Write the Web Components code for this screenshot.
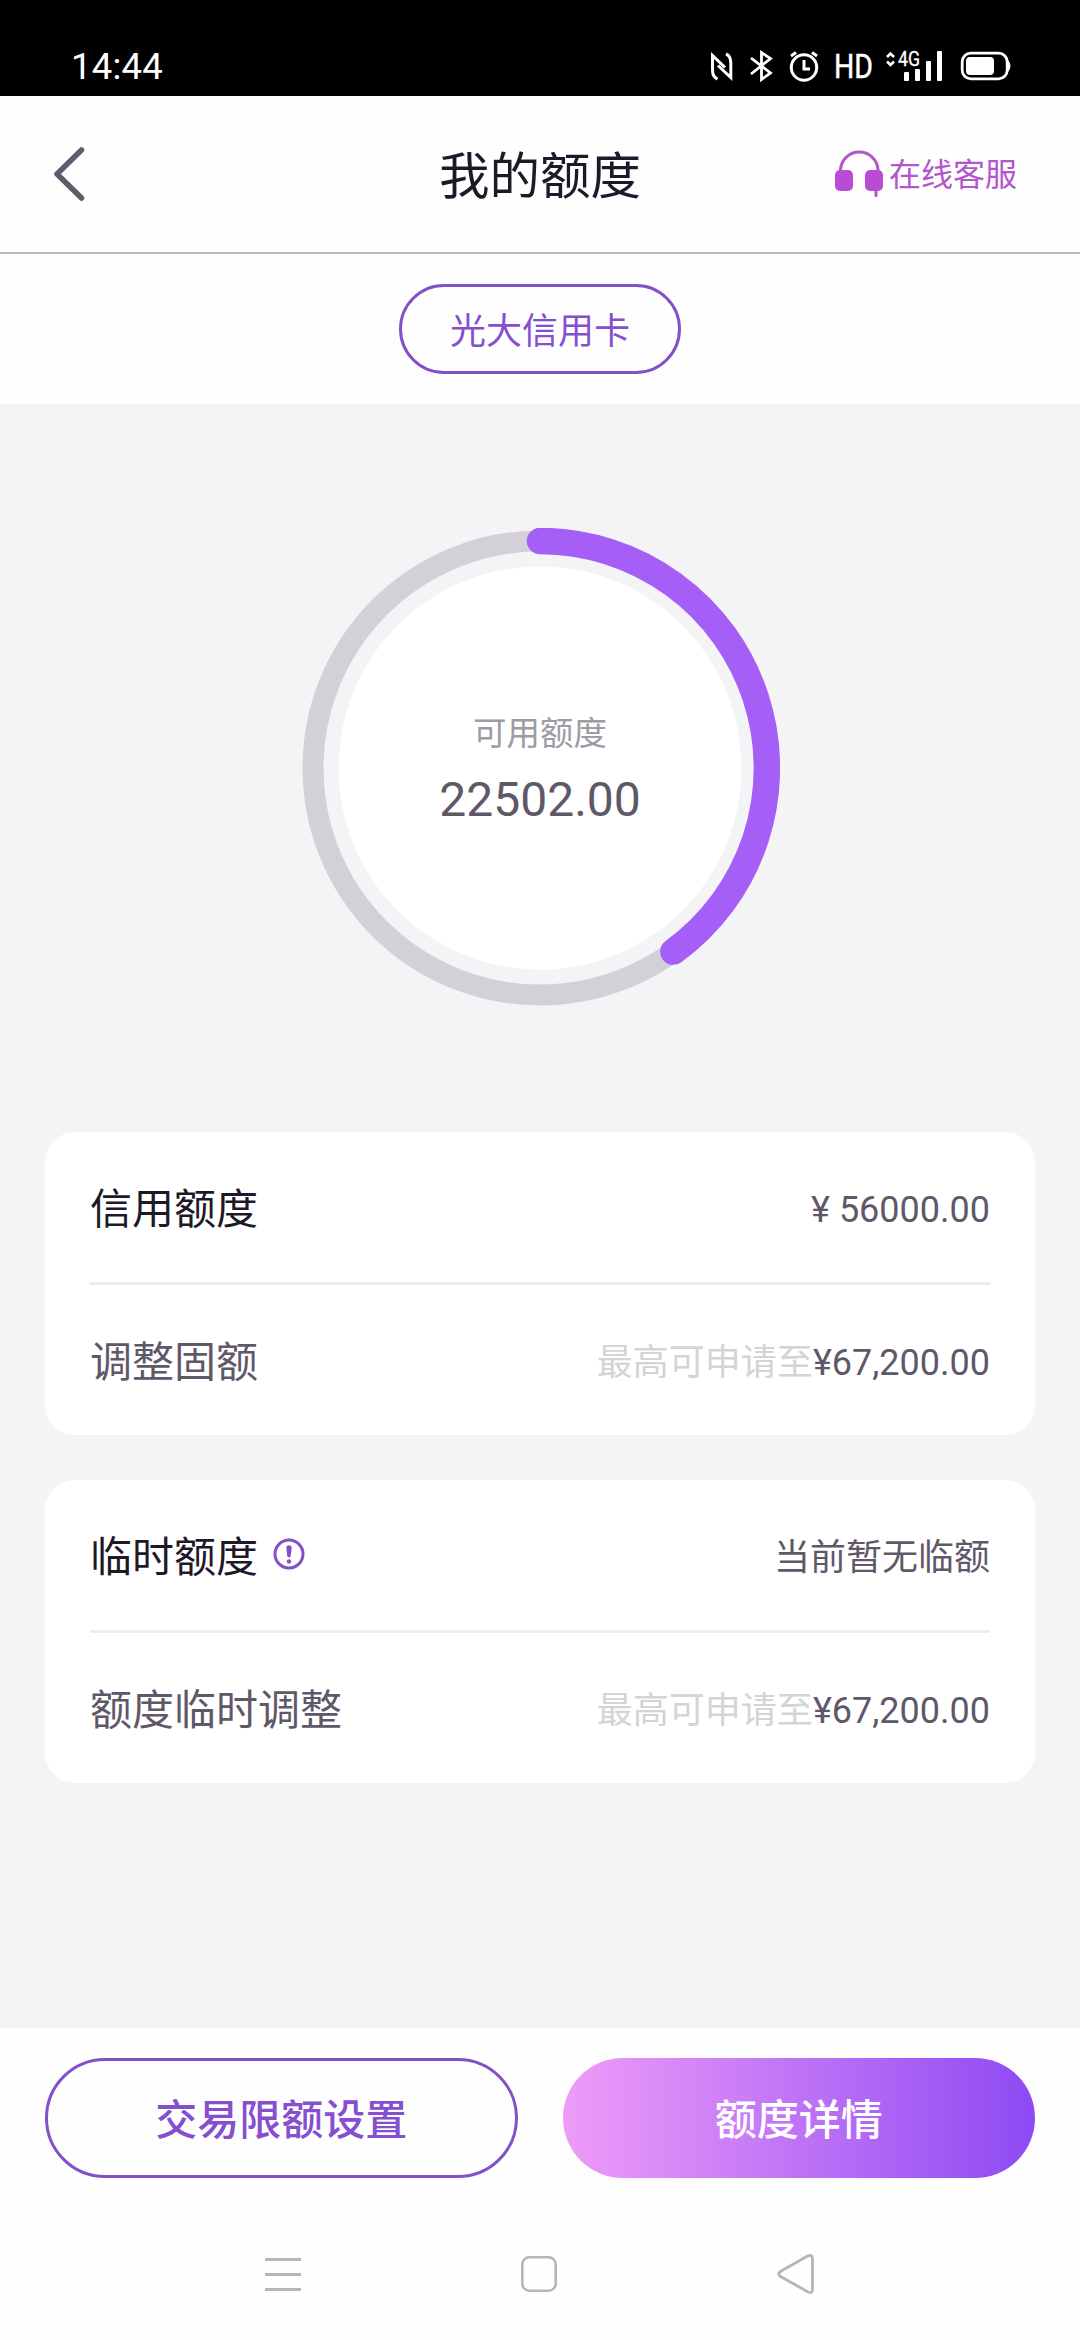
<!DOCTYPE html>
<html lang="zh-CN">
<head>
<meta charset="utf-8">
<title>我的额度</title>
<style>
html,body{margin:0;padding:0;background:#fefefe}
body{font-family:Roboto,"Noto Sans CJK SC",sans-serif;color:#5f5869;width:1080px}
</style>
</head>
<body>
<limit-app></limit-app>
<script>
const define = (name, html) => customElements.define(name, class extends HTMLElement {
  constructor() {
    super();
    const t = document.createElement('template');
    t.innerHTML = html;
    this.attachShadow({mode: 'open'}).append(t.content.cloneNode(true));
  }
});

define('status-bar', `
<style>
:host{display:flex;height:96px;background:#000;color:#fff;justify-content:space-between;box-sizing:border-box;padding:0 68px 0 71px}
.time{font-size:36.500px;line-height:44px;margin-top:45px;letter-spacing:.2px}
svg{display:block;margin-top:44px}
text{font-family:Roboto,sans-serif;fill:#fff}
</style>
<div class="time">14:44</div>
<svg width="307" height="44" viewBox="705 44 307 44" fill="none" stroke="#fff" stroke-width="3">
  <path d="M717.500 79Q712.500 77 712.500 70V55.500L725 67.500M726 54Q730.800 56 730.800 63V77.500L718 65.500"/>
  <path d="M751 58L770.500 73L761.500 79.500V52.500L770.500 58.500L751 74" stroke-width="2.800"/>
  <circle cx="804" cy="67.500" r="12.700"/><path d="M804 60V69H810M791 56L796 52.500M817 56L812 52.500"/>
  <text x="834" y="78" font-size="33.500" textLength="39" lengthAdjust="spacingAndGlyphs" style="stroke:#fff;stroke-width:.5px">HD</text>
  <path d="M887 57L890.500 53.500L894 57M887 61.500L890.500 65L894 61.500" stroke-width="2.600"/>
  <text x="898" y="66" font-size="20.500" textLength="22" lengthAdjust="spacingAndGlyphs" style="stroke:#fff;stroke-width:.3px">4G</text>
  <g fill="#fff" stroke="none"><rect x="904" y="72" width="5" height="9" rx="1"/><rect x="915" y="69" width="5" height="12" rx="1"/><rect x="926" y="61" width="5" height="20" rx="1"/><rect x="937" y="51" width="5" height="30" rx="1"/>
  <rect x="966" y="57" width="28" height="18" rx="4"/><path d="M1008 60Q1013 66 1008 72L1006 73V59Z"/></g>
  <rect x="962.200" y="53.200" width="45" height="25.600" rx="8.500" stroke-width="2.800"/>
</svg>`);

define('title-bar', `
<style>
:host{display:grid;grid-template-columns:minmax(0,1fr) auto minmax(0,1fr);align-items:center;height:158px;box-sizing:border-box;padding:0 52px;border-bottom:2px solid #b9b9bb}
svg{display:block}
.title{font-size:50.500px;line-height:60px;color:#1d1929;padding-top:6px}
.help{display:flex;justify-content:flex-end;align-items:center;gap:6px;color:#b355cc;font-size:32px;line-height:40px;margin-right:11px}
.help div{padding-top:2px}
</style>
<svg width="36" height="60" viewBox="0 0 36 60" fill="none" stroke="#615a6c" stroke-width="5.500" stroke-linecap="round" stroke-linejoin="round"><path d="M29.500 6L5 30L29.500 54"/></svg>
<div class="title"><slot></slot></div>
<div class="help"><svg width="48" height="50" viewBox="0 0 48 50"><path d="M5.500 24V20.500A18.800 18.800 0 0 1 43 20.500V24M41 40V46.500" fill="none" stroke="#b156cb" stroke-width="3" stroke-linecap="round"/><rect y="21" width="18" height="21" rx="5" fill="#ba4cd3"/><rect x="30" y="21" width="18" height="21" rx="5" fill="#ba4cd3"/></svg><div><slot name="help"></slot></div></div>`);

define('bank-chip', `
<style>
:host{display:flex;justify-content:center;align-items:center;height:150px}
.chip{box-sizing:border-box;width:282px;height:90px;padding-top:5px;border:3px solid #8350c8;border-radius:45px;display:flex;align-items:center;justify-content:center;font-size:36px;line-height:40px;color:#854fd0}
</style>
<div class="chip"><slot></slot></div>`);

define('limit-gauge', `
<style>
:host{display:grid;width:480px;height:480px;place-items:center}
svg,.text{grid-area:1/1}
.text{display:flex;flex-direction:column;align-items:center;padding-top:6px}
.label{font-size:33.500px;line-height:40px;color:#9d9ba3}
.num{font-size:48px;line-height:56px;color:#5f5869;margin-top:18px}
</style>
<svg width="480" height="480" viewBox="-240 -240 480 480">
  <circle r="201.500" fill="#fff"/>
  <circle r="227" fill="none" stroke="#d3d0d8" stroke-width="21"/>
  <path d="M0 -227A227 227 0 0 1 133.400 183.600" fill="none" stroke="#a55ff7" stroke-width="26.500" stroke-linecap="round"/>
</svg>
<div class="text"><div class="label"><slot name="label"></slot></div><div class="num"><slot></slot></div></div>`);

define('info-card', `
<style>
:host{display:flex;flex-direction:column;background:#fff;border-radius:30px;padding:0 45px}
::slotted(:not(:first-child)){border-top:3px solid #ededee}
</style><slot></slot>`);

define('info-row', `
<style>
:host{display:flex;height:150px;align-items:center;justify-content:space-between;color:#5f5869}
:host([strong]) .label{color:#1d1929}
.label{display:flex;align-items:center;font-size:42px;line-height:50px;padding-top:5px}
.value{font-size:36px;line-height:44px;white-space:pre;padding-top:5px}
::slotted([slot=hint]){color:#d4d3d6}
</style>
<div class="label"><slot name="label"></slot></div>
<div class="value"><slot name="hint"></slot><slot></slot></div>`);

define('alert-icon', `
<style>:host{display:block;margin-left:15px;margin-top:-8px}svg{display:block}</style>
<svg width="32" height="32" viewBox="0 0 32 32"><circle cx="16" cy="16" r="14" fill="none" stroke="#8350c8" stroke-width="3"/><path d="M13.300 10A2.700 2.700 0 0 1 18.700 10L17.600 18.500Q16 20.500 14.400 18.500Z" fill="#8350c8"/><circle cx="16" cy="23.500" r="2.200" fill="#8350c8"/></svg>`);

define('pill-button', `
<style>
:host{flex:none;width:472.500px;box-sizing:border-box;height:120px;padding-top:5px;border-radius:60px;border:3px solid #8350c8;display:flex;align-items:center;justify-content:center;font-size:42px;line-height:50px;font-weight:500;color:#854fd0}
:host([filled]){border:0;color:#fff;background:linear-gradient(90deg,#ee9cf8,#8e4af3)}
</style><slot></slot>`);

define('system-nav', `
<style>:host{display:flex;height:132px;align-items:flex-start;padding:46px 265px 0;justify-content:space-between;box-sizing:border-box}svg{display:block}</style>
<svg width="36" height="40" viewBox="0 0 36 40" fill="#b6b6b6"><path d="M0 4H36V7H0ZM0 19H36V22H0ZM0 34H36V37H0Z"/></svg>
<svg width="36" height="40" viewBox="0 0 36 40" fill="none" stroke="#b6b6b6" stroke-width="2.600"><rect x="1.300" y="3.300" width="33.400" height="33.400" rx="7"/></svg>
<svg width="38" height="40" viewBox="0 0 38 40" fill="none" stroke="#b6b6b6" stroke-width="2.800"><path d="M30.500 2.100Q35.500 0 35.500 5V35.500Q35.500 40 31 37.900L3.500 22.500Q0 20 3.500 17.500Z"/></svg>`);

define('limit-app', `
<style>
:host{display:flex;flex-direction:column;width:1080px;height:2340px;overflow:hidden;background:#fefefe}
main{display:flex;flex-direction:column;align-items:center;height:1624px;box-sizing:border-box;background:#f4f4f7;padding-top:124px}
.cards{align-self:stretch;display:flex;flex-direction:column;gap:45px;padding:0 45px;margin-top:124px}
footer{display:flex;gap:45px;padding:30px 45px 30px}
</style>
<status-bar></status-bar>
<title-bar>我的额度<span slot="help">在线客服</span></title-bar>
<bank-chip>光大信用卡</bank-chip>
<main>
  <limit-gauge><span slot="label">可用额度</span>22502.00</limit-gauge>
  <div class="cards">
    <info-card>
      <info-row strong><span slot="label">信用额度</span>¥ 56000.00</info-row>
      <info-row><span slot="label">调整固额</span><span slot="hint">最高可申请至</span>¥67,200.00</info-row>
    </info-card>
    <info-card>
      <info-row strong><span slot="label">临时额度</span><alert-icon slot="label"></alert-icon>当前暂无临额</info-row>
      <info-row><span slot="label">额度临时调整</span><span slot="hint">最高可申请至</span>¥67,200.00</info-row>
    </info-card>
  </div>
</main>
<footer><pill-button>交易限额设置</pill-button><pill-button filled>额度详情</pill-button></footer>
<system-nav></system-nav>`);
</script>
</body>
</html>
